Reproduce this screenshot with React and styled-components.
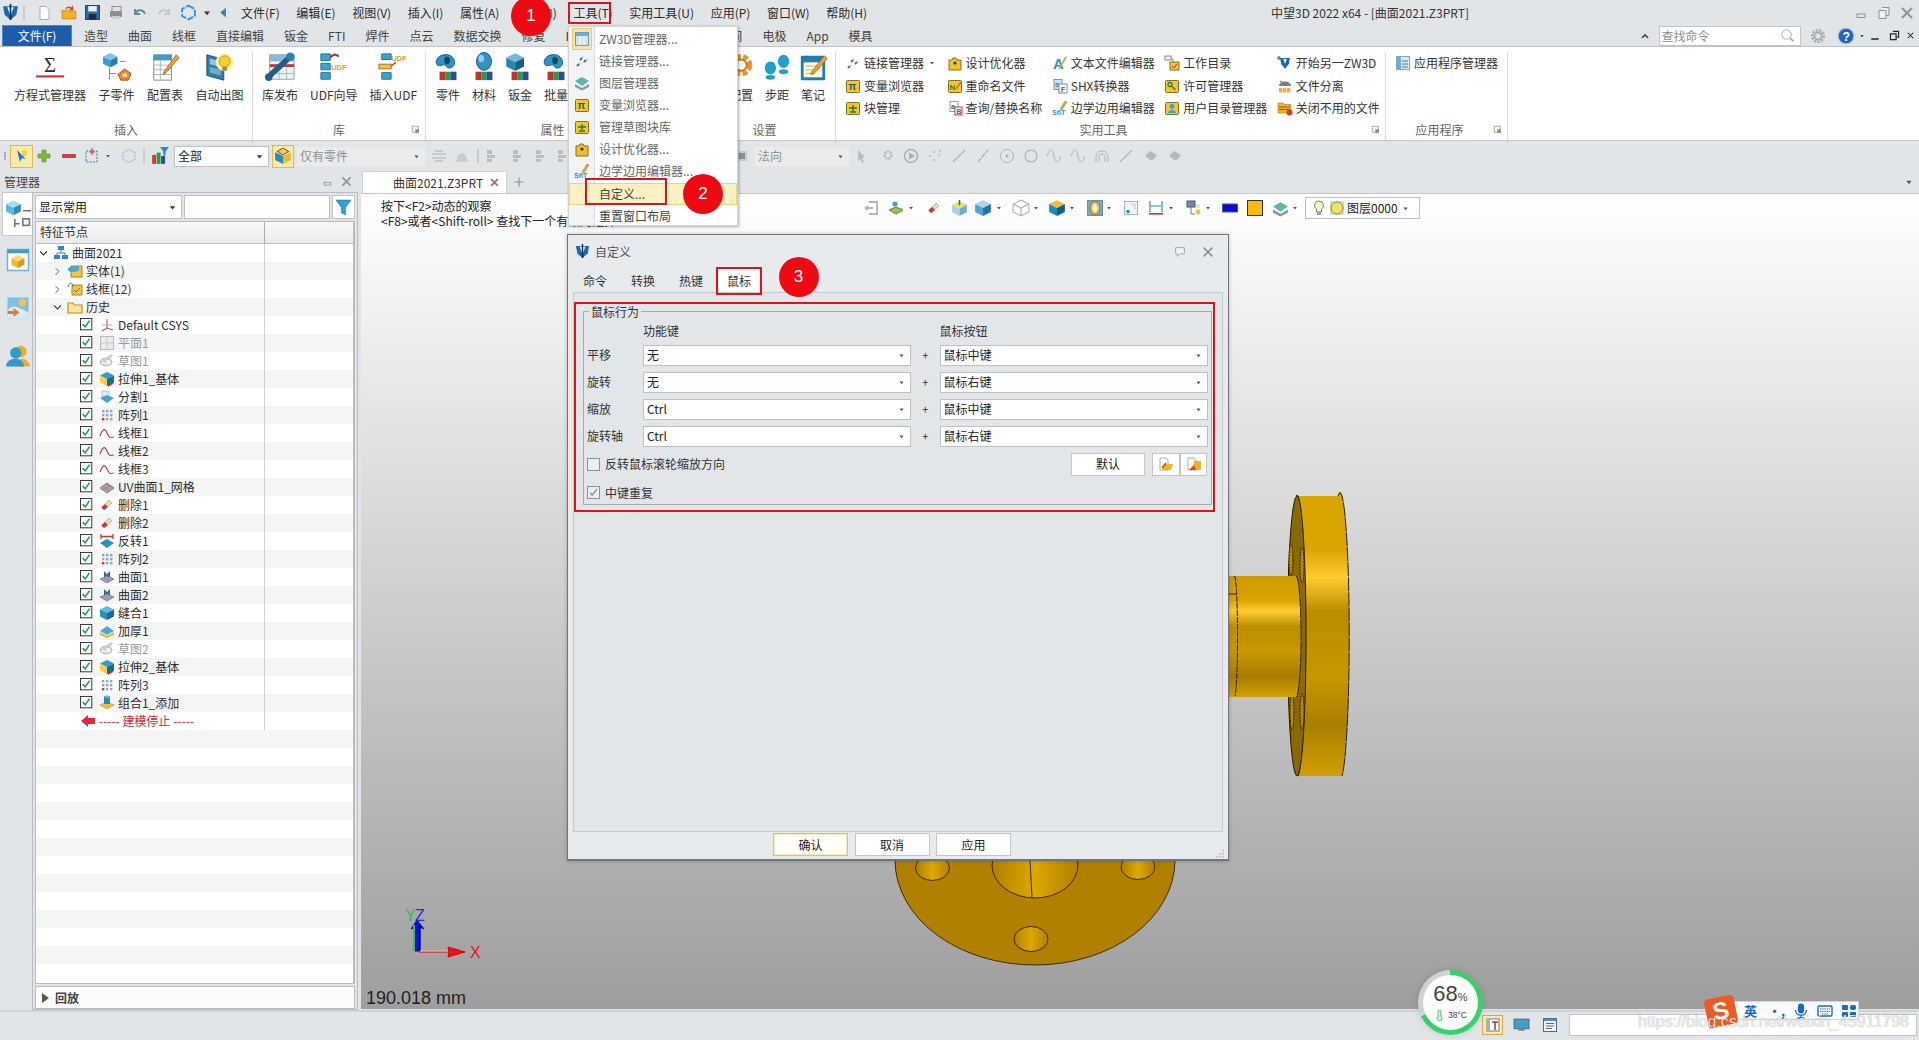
import React from "react"
import styled, { createGlobalStyle } from "styled-components"

const GlobalStyle = createGlobalStyle`
  html, body {
    margin: 0;
    padding: 0;
    background: #e1e5e8;
    overflow: hidden;
  }
  body {
    font-family: "Noto Sans CJK SC", "Liberation Sans", sans-serif;
    font-size: 12px;
    line-height: 18px;
    color: #333;
  }
  * {
    box-sizing: border-box;
  }
`

// 작은 아이콘 도우미
const Cube = ({ t, l, r }) => (
  <>
    <polygon points="8,1 15,4.5 8,8 1,4.5" fill={t} />
    <polygon points="1,4.5 8,8 8,15 1,11.5" fill={l} />
    <polygon points="15,4.5 8,8 8,15 15,11.5" fill={r} />
  </>
)

const YellowBox = ({ children }) => (
  <>
    <rect x="1.5" y="2.5" width="13" height="12" rx="1" fill="#f5c530" stroke="#8a6d1e" />
    {children}
  </>
)

const Tiny = ({ x, y, c = "#333", s = 7, children }) => (
  <text x={x} y={y} fontSize={s} fill={c} fontFamily="Liberation Sans" fontWeight="700">
    {children}
  </text>
)

const Grid3 = (
  <>
    {[3, 7, 11].map((x) =>
      [3, 7, 11].map((y) => (
        <rect key={x + "-" + y} x={x} y={y} width="2.4" height="2.4" fill={y === 11 && x < 7 ? "#c0392b" : "#8fa3bb"} />
      ))
    )}
  </>
)

const SketchMark = (
  <>
    <ellipse cx="7" cy="9" rx="5.5" ry="3.5" fill="none" stroke="#c4c6c8" strokeWidth="2" />
    <path d="M4 9l9-7" stroke="#c9cbcd" strokeWidth="2.4" />
    <circle cx="7" cy="9" r="1.6" fill="#d8dadc" />
  </>
)

const Wave = <path d="M1 11c3-8 5-8 7-3s3 5 7 4" fill="none" stroke="#b5433c" strokeWidth="1.2" />

const Eraser = (
  <>
    <path d="M5 13L2.5 10.5 10 3l3 3z" fill="#efd9b6" stroke="#a89a8a" strokeWidth=".6" />
    <path d="M5 13L2.5 10.5 6 7l3 3z" fill="#c43b3b" />
  </>
)

const Surf = (
  <>
    <path d="M5 2l3 3 3-3v7H5z" fill="#2f6f9f" />
    <path d="M1 10l7-3 7 3-7 4z" fill="#7fa9c9" stroke="#c0524f" strokeWidth=".7" />
  </>
)

const I = {
  logo: (
    <>
      <path d="M1 2h14l-1.5 8L8 15l-5.5-5z" fill="#1b6aa8" />
      <path d="M5 3h6L8 11z" fill="#fff" />
      <path d="M8 0v15" stroke="#10324f" strokeWidth="1.6" />
    </>
  ),
  doc: <path d="M4 1.5h6l3 3v10H4z" fill="#fff" stroke="#a8adb2" />,
  open: (
    <>
      <path d="M1 6h5l1 1h7v7H1z" fill="#f4b41f" stroke="#b27b10" strokeWidth=".6" />
      <path d="M4 5c1-3 4-3 6-2l1-2 1 5-5 0 2-1.5c-1-.6-3-.6-5 .5z" fill="#d9491e" />
    </>
  ),
  save: (
    <>
      <rect x="1.5" y="1.5" width="13" height="13" fill="#2d6ea6" stroke="#1c4468" />
      <rect x="4" y="2" width="8" height="5" fill="#eef3f6" />
      <rect x="4.5" y="9.5" width="7" height="5" fill="#1c2c3a" />
    </>
  ),
  print: (
    <>
      <rect x="4" y="1.5" width="9" height="5" fill="#e2e2e2" stroke="#8d8d8d" />
      <rect x="2" y="6" width="12" height="6" rx="1" fill="#8d8f91" />
      <rect x="4" y="11" width="8" height="3" fill="#cfcfcf" />
    </>
  ),
  undo: <path d="M3 9c2-5 8-5 10 0M3 4v5h5" fill="none" stroke="#5f8aa6" strokeWidth="2" />,
  redo: <path d="M13 9c-2-5-8-5-10 0M13 4v5H8" fill="none" stroke="#c4c8cb" strokeWidth="2" />,
  sync: <path d="M8 1.5l6 3.2v6.6l-6 3.2-6-3.2V4.7z" fill="none" stroke="#3a93cf" strokeWidth="1.8" strokeDasharray="6 1.6" />,
  caret: <path d="M4 6h8l-4 5z" fill="#333" />,
  dcaret: <path d="M5 6.5h6l-3 4z" fill="#555" />,
  back: <path d="M11 2v12L4 8z" fill="#2f86c9" />,
  sigma: (
    <>
      <text x="16" y="21" fontSize="22" textAnchor="middle" fill="#2a2a2a" fontFamily="Liberation Serif">
        Σ
      </text>
      <rect x="1" y="25" width="30" height="2" fill="#e01b24" />
    </>
  ),
  subpart: (
    <>
      <g transform="scale(1.1)">
        <Cube t="#7fc4e4" l="#3a9ccc" r="#1e7fb2" />
      </g>
      <path d="M19 10h6M8 17v12M8 23h7" stroke="#7a8288" fill="none" />
      <path d="M17 24l7-6 7 5-3 7h-8z" fill="#e8892b" stroke="#a34e10" />
      <path d="M21 24l5-2 1 4-4 1z" fill="#fbe7b2" />
    </>
  ),
  config: (
    <>
      <rect x="4" y="3" width="19" height="27" fill="#fff" stroke="#7d8c96" />
      <rect x="4" y="3" width="19" height="6" fill="#3d9cc3" />
      <path d="M4 14h19M4 19h19M4 24h19M11 9v21" stroke="#a8b4ba" />
      <path d="M15 21L28 3l3 3-14 16-3 2z" fill="#f2a52c" stroke="#a6661a" />
    </>
  ),
  autodraw: (
    <>
      <path d="M2 3l18 5v22L2 25z" fill="#2f7fa6" stroke="#1c5270" />
      <path d="M5 7l12 3v6L5 13z" fill="#8fc7dd" />
      <path d="M5 16l12 3v6L5 22z" fill="#6aaecb" />
      <circle cx="21" cy="11" r="9.5" fill="#fbf0a2" />
      <circle cx="21" cy="10" r="6" fill="#f6cf2e" stroke="#c8921a" />
      <rect x="18.5" y="16" width="5" height="4" fill="#9a8a5a" />
    </>
  ),
  libpub: (
    <>
      <rect x="5" y="3" width="26" height="26" fill="#eef3f6" stroke="#8aa0ae" />
      <rect x="5" y="3" width="26" height="7" fill="#86bcd8" />
      <rect x="5" y="13" width="26" height="3" fill="#b73c3c" />
      <path d="M15 17v12M23 17v12M5 23h26" stroke="#a6b4bc" />
      <path d="M3 27L26 6" stroke="#1e5f88" strokeWidth="6" />
      <circle cx="27" cy="5" r="4.5" fill="#2f80b2" />
      <circle cx="4" cy="27" r="4" fill="#1e5f88" />
    </>
  ),
  udfwiz: (
    <>
      <path d="M2 2h10v7H2zM2 12h10v7H2zM2 22h10v7H2z" fill="#3aa5cf" stroke="#1c6f90" />
      <path d="M12 6c3-4 7-4 9-1" fill="none" stroke="#b53a2a" strokeWidth="2.4" />
      <Tiny x="13" y="19" c="#d9a032" s="8">UDF</Tiny>
    </>
  ),
  udfins: (
    <>
      <path d="M4 2h10v6H4zM4 22h10v7H4z" fill="#3aa5cf" stroke="#1c6f90" />
      <rect x="1" y="13" width="13" height="5" fill="#f3c243" stroke="#9a7520" />
      <path d="M14 15l5-4" stroke="#c24a2a" strokeWidth="1.6" />
      <Tiny x="14" y="10" c="#d9a032" s="8">UDF</Tiny>
    </>
  ),
  part: (
    <>
      <path d="M4 8c3-6 13-7 17-2s2 10-3 11-3-5-8-3-8-1-6-6z" fill="#2f93c4" stroke="#14597e" />
      <ellipse cx="15" cy="9" rx="3" ry="4" fill="#0e4866" />
      <rect x="7" y="21" width="6" height="9" fill="#c0342b" />
      <rect x="13" y="21" width="6" height="9" fill="#2d9a45" />
      <rect x="19" y="21" width="6" height="9" fill="#2b4aa8" />
    </>
  ),
  material: (
    <>
      <ellipse cx="16" cy="10" rx="8" ry="9.5" fill="#2f93c4" stroke="#14597e" />
      <ellipse cx="13" cy="7" rx="3" ry="4" fill="#8fd0ea" />
      <rect x="7" y="21" width="6" height="9" fill="#c0342b" />
      <rect x="13" y="21" width="6" height="9" fill="#2d9a45" />
      <rect x="19" y="21" width="6" height="9" fill="#2b4aa8" />
    </>
  ),
  sheet: (
    <>
      <g transform="scale(1.35)">
        <Cube t="#75bbd8" l="#2a86b0" r="#175f84" />
      </g>
      <rect x="7" y="21" width="6" height="9" fill="#c0342b" />
      <rect x="13" y="21" width="6" height="9" fill="#2d9a45" />
      <rect x="19" y="21" width="6" height="9" fill="#2b4aa8" />
    </>
  ),
  cog: (
    <>
      <circle cx="16" cy="14" r="9" fill="none" stroke="#e8952c" strokeWidth="6" strokeDasharray="5 2.4" />
      <circle cx="16" cy="14" r="6" fill="none" stroke="#c97a1c" strokeWidth="2" />
    </>
  ),
  steps: (
    <>
      <ellipse cx="9" cy="17" rx="6" ry="7" fill="#1da1c9" />
      <ellipse cx="9" cy="27" rx="5" ry="2.6" fill="#1da1c9" />
      <ellipse cx="23" cy="10" rx="6" ry="7" fill="#1da1c9" />
      <ellipse cx="23" cy="21" rx="5" ry="2.6" fill="#1da1c9" />
    </>
  ),
  note: (
    <>
      <rect x="3" y="4" width="26" height="26" rx="1" fill="#1b7fb0" />
      <rect x="6" y="11" width="20" height="16" fill="#fff7d8" />
      <path d="M8 15h14M8 19h14M8 23h10" stroke="#a8b5a0" />
      <path d="M14 22L28 4l3 3-14 16-3 1z" fill="#f2a52c" stroke="#a6661a" />
    </>
  ),
  link: <path d="M3 13l3-3M6 7l3-3M10 9l3-3" fill="none" stroke="#2f74b5" strokeWidth="2" strokeDasharray="3 1" />,
  grid: (
    <>
      <rect x="1.5" y="1.5" width="13" height="13" fill="#cfe2ee" stroke="#5d9ec2" />
      <rect x="2" y="2" width="12" height="3" fill="#6db0d2" />
      <path d="M6 5v9M10 5v9" stroke="#fff" />
    </>
  ),
  layers: (
    <>
      <path d="M1 9l7 4 7-4v3l-7 3.5L1 12z" fill="#8a9aa4" />
      <path d="M1 6l7-4 7 4-7 5z" fill="#5bb8aa" />
    </>
  ),
  pi: <YellowBox><Tiny x="3.5" y="12" c="#1d5f6a" s="10">π</Tiny></YellowBox>,
  block: <YellowBox><path d="M4 8h8M8 5v6M5 12h6" stroke="#1f7a3a" strokeWidth="1.4" /></YellowBox>,
  optim: (
    <>
      <path d="M2 5h3l1-2h3l1 2h4v10H2z" fill="#f1c22c" stroke="#8a6d1e" />
      <circle cx="8" cy="8" r="1.6" fill="#333" />
    </>
  ),
  sht: (
    <>
      <Tiny x="0" y="15" c="#2794c4" s="7">SñT</Tiny>
      <path d="M8 9l5-8 2 1-5 8z" fill="#e6a53a" stroke="#8a6d1e" strokeWidth=".4" />
    </>
  ),
  rename: <YellowBox><Tiny x="2.5" y="12" c="#2e7d4f" s="8">N</Tiny><path d="M9 11l5-7" stroke="#c9772a" strokeWidth="1.5" /></YellowBox>,
  query: (
    <>
      <rect x="3" y="1.5" width="8" height="10" fill="#fff" stroke="#8aa0ae" />
      <Tiny x="4" y="9" c="#2b5da8" s="7">a</Tiny>
      <rect x="8" y="7" width="7" height="8" fill="#fff" stroke="#b53a2a" />
      <Tiny x="9.5" y="14" c="#b53a2a" s="7">B</Tiny>
    </>
  ),
  textedit: (
    <>
      <Tiny x="1" y="14" c="#2794c4" s="15">A</Tiny>
      <path d="M7 14L14 2" stroke="#e0a030" strokeWidth="1.6" />
    </>
  ),
  shx: (
    <>
      <rect x="2" y="1.5" width="8" height="10" fill="#cfe2ee" stroke="#6a9ec0" />
      <Tiny x="3" y="9" c="#2b5da8" s="6">S</Tiny>
      <rect x="7" y="6" width="8" height="9" fill="#fff" stroke="#7a8a94" />
      <Tiny x="9" y="13.5" c="#c0392b" s="7">F</Tiny>
    </>
  ),
  workdir: (
    <>
      <rect x="1" y="1" width="6" height="4" fill="#eee" stroke="#888" />
      <path d="M7 4h2v4" fill="none" stroke="#888" />
      <rect x="6" y="7" width="9" height="8" fill="#f5c530" stroke="#8a6d1e" />
      <path d="M8 11l2 2 3-4" fill="none" stroke="#a33" />
    </>
  ),
  license: <YellowBox><circle cx="6" cy="6.5" r="2" fill="none" stroke="#2e7d4f" strokeWidth="1.3" /><path d="M7.5 8l4 4" stroke="#2e7d4f" strokeWidth="1.4" /></YellowBox>,
  userdir: <YellowBox><circle cx="8" cy="6.5" r="2.4" fill="#3f9fd0" /><path d="M4 13c0-4 8-4 8 0z" fill="#3f9fd0" /></YellowBox>,
  start: (
    <>
      <path d="M3 3h10l-1.2 6L8 14 4.2 9z" fill="#1b6aa8" />
      <path d="M6 4h4L8 9z" fill="#dbe9f2" />
      <path d="M2 1v4M0 3h4" stroke="#48a54d" strokeWidth="1.6" />
    </>
  ),
  splitfile: (
    <>
      <path d="M2 8c0-6 12-6 12 0H8z" fill="#5f8aa6" />
      <path d="M3 3l6 4" stroke="#d84a3a" strokeWidth="1.2" />
      {[2, 6, 10].map((x) => (
        <rect key={x} x={x} y="10" width="3.4" height="4.5" fill="#f0b040" />
      ))}
    </>
  ),
  closefile: (
    <>
      <path d="M1 3h5l1 1.5h7V13H1z" fill="#f4b41f" stroke="#a97b12" strokeWidth=".6" />
      <path d="M2 7h11M2 9.5h11" stroke="#8a5d10" />
      <circle cx="12.5" cy="12.5" r="3" fill="#d63a2f" />
    </>
  ),
  appmgr: (
    <>
      <rect x="1.5" y="1.5" width="13" height="13" fill="#d8e8f1" stroke="#7fa7be" />
      <rect x="1.5" y="1.5" width="4.5" height="13" fill="#6fb0d1" />
      <path d="M7 6h6M7 9h6M7 12h6" stroke="#4b7d99" />
    </>
  ),
  launcher: (
    <>
      <path d="M3 3h8v8H3z" fill="#fff" stroke="#8b8f93" />
      <path d="M7 7h5v5H7z" fill="#8b8f93" />
    </>
  ),
  chevUp: <path d="M3 10l5-5 5 5-2 1-3-3-3 3z" fill="#444" />,
  search: (
    <>
      <circle cx="7" cy="7" r="5" fill="none" stroke="#b9c0c5" strokeWidth="1.2" />
      <path d="M11 11l3 3" stroke="#7aa0b4" strokeWidth="1.6" />
    </>
  ),
  gear: (
    <>
      <circle cx="8" cy="8" r="5" fill="none" stroke="#a9afb3" strokeWidth="2.6" strokeDasharray="2 1" />
      <circle cx="8" cy="8" r="3" fill="none" stroke="#9aa1a6" />
    </>
  ),
  help: (
    <>
      <circle cx="8" cy="8" r="7" fill="#2363b8" stroke="#a9c6e6" />
      <Tiny x="4.8" y="12" c="#fff" s="11">?</Tiny>
    </>
  ),
  winMin: <rect x="3" y="11" width="10" height="2" fill="#1e2428" />,
  winRestore: <path d="M6 3h7v7h-2M3 6h7v7H3z" fill="none" stroke="#1e2428" strokeWidth="1.4" />,
  winClose: <path d="M4 4l8 8M12 4l-8 8" stroke="#1e2428" strokeWidth="1.5" />,
  capMin: <rect x="4" y="9" width="8" height="3.5" fill="none" stroke="#8d9398" />,
  capRestore: <path d="M6 2.5h7v8h-3M3 5.5h7v8H3z" fill="#eef0f1" stroke="#8d9398" />,
  capClose: <path d="M3 3l10 10M13 3L3 13" stroke="#8d9398" strokeWidth="2" />,
  docClose: <path d="M3 3l10 10M13 3L3 13" stroke="#8a7a5c" strokeWidth="2.4" />,
  plus2: <path d="M8 2v12M2 8h12" stroke="#8d9398" strokeWidth="1.6" />,
  tip: <path d="M3 3h10v7H8l-3 3v-3H3z" fill="#f2f4f5" stroke="#9aa0a4" />,
  gCheck: <path d="M3 8l3 4 7-9" fill="none" stroke="#7d8488" strokeWidth="1.8" />,
  handle: <path d="M8 2v12" stroke="#555" strokeWidth="2" strokeDasharray="2 1.6" />,
  pick: (
    <>
      <path d="M3 2l3 12 2-4 4 1z" fill="#1c7ec0" />
      <path d="M8 3c3-2 6 0 5 3l-2 2H9z" fill="#f7d21e" />
    </>
  ),
  plus: <path d="M6 2h4v4h4v4h-4v4H6v-4H2V6h4z" fill="#7fb73b" stroke="#5c8c22" strokeWidth=".6" />,
  minus: <rect x="1" y="6" width="14" height="4" rx="1" fill="#cc4040" />,
  dashBox: (
    <>
      <rect x="2" y="3" width="11" height="11" fill="none" stroke="#2d7aa8" strokeDasharray="2 1.4" />
      <path d="M8 0v7M5 4h6" stroke="#d83b30" strokeWidth="1.2" />
    </>
  ),
  hex: <path d="M8 1.5l6 3.2v6.6l-6 3.2-6-3.2V4.7z" fill="none" stroke="#9cc4da" strokeWidth="1.2" strokeDasharray="3 1" />,
  vsep: <rect x="7.5" y="1" width="1" height="14" fill="#aeb3b7" />,
  chartFilter: (
    <>
      <rect x="1" y="7" width="3.5" height="8" fill="#d23c2e" />
      <rect x="5" y="5" width="3.5" height="10" fill="#2d9a45" />
      <rect x="9" y="8" width="3.5" height="7" fill="#2b4aa8" />
      <path d="M8 0h8l-3 4v3l-2 1V4z" fill="#1f93c4" />
    </>
  ),
  goldCube: (
    <>
      <Cube t="#ffffff" l="#2f8ab8" r="#e8b93a" />
      <path d="M3 4l5-3 5 3-5 3z" fill="#f5d060" stroke="#7a6a22" />
    </>
  ),
  gLines: (
    <>
      <path d="M1 6h14M1 10h14" stroke="#aab0b4" />
      <rect x="4" y="2" width="8" height="2" fill="#c4c8cb" />
      <rect x="4" y="12" width="8" height="2" fill="#c4c8cb" />
    </>
  ),
  gBell: <path d="M3 12c0-9 10-9 10 0zM2 12h12v2H2z" fill="#c9cdd0" />,
  gAlign: <path d="M3 2h5v4H3zM3 7h8v3H3zM3 11h5v3H3z" fill="#b9bdc0" />,
  gSquare: <rect x="4" y="4" width="8" height="8" fill="#8d9194" stroke="#c8cbcd" strokeWidth="2" />,
  gPick: <path d="M4 2l7 7-3 1 2 4-2 1-2-4-2 2z" fill="#b8bcbf" />,
  gGear: <circle cx="9" cy="7" r="3.5" fill="none" stroke="#b3b7ba" strokeWidth="2.4" strokeDasharray="2 1" />,
  gPlay: (
    <>
      <circle cx="8" cy="8" r="6.5" fill="none" stroke="#a9adb0" strokeWidth="1.4" />
      <path d="M6 4.5l6 3.5-6 3.5z" fill="#a9adb0" />
    </>
  ),
  gDots: <path d="M2 8h2M6 4h2M6 12h2M11 7h2M12 3h2" stroke="#b5b9bc" strokeWidth="1.6" />,
  gLine: <path d="M2 14L14 2" stroke="#b0b4b7" strokeWidth="1.2" />,
  gLine2: <path d="M3 14L13 2" stroke="#b0b4b7" strokeWidth="1.4" strokeDasharray="5 1" />,
  gCircleDot: (
    <>
      <circle cx="8" cy="8" r="6.5" fill="none" stroke="#aeb2b5" />
      <circle cx="8" cy="8" r="1.5" fill="#aeb2b5" />
    </>
  ),
  gCircle: <circle cx="8" cy="8" r="6" fill="none" stroke="#aeb2b5" strokeWidth="1.2" />,
  gWave: <path d="M1 8c3-8 5-8 7 0s4 8 7 0" fill="none" stroke="#aeb2b5" />,
  gArc: <path d="M2 14V9c0-8 12-8 12 0v5M5 14V9c0-4 6-4 6 0v5" fill="none" stroke="#aeb2b5" />,
  gBlob: <path d="M2 8l5-5 7 4-5 6z" fill="#b5b9bc" />,
  exit: (
    <>
      <path d="M6 2h8v12H6" fill="#fff" stroke="#9aa0a4" strokeWidth="1.4" />
      <path d="M1 8l4-3v2h5v2H5v2z" fill="#b2b7bb" />
    </>
  ),
  mesh: (
    <>
      <path d="M1 10l7-3 7 3-7 4z" fill="#97c25d" stroke="#5a8a2a" />
      <circle cx="7" cy="4" r="2.6" fill="#4c9cc7" />
      <path d="M14 8v5" stroke="#d7a336" />
    </>
  ),
  eraser: Eraser,
  cubeUp: (
    <>
      <Cube t="#f8d879" l="#a8d3e6" r="#6fb0d1" />
      <path d="M8 0v5" stroke="#2c7a44" strokeWidth="1.4" />
    </>
  ),
  blueCube: <Cube t="#a9d4ea" l="#4da2cf" r="#1c76a8" />,
  wireCube: (
    <>
      <path d="M8 1l7 3.5v7L8 15l-7-3.5v-7z" fill="#fff" stroke="#a9b4bb" />
      <path d="M1 4.5L8 8l7-3.5M8 8v7" fill="none" stroke="#a9b4bb" />
    </>
  ),
  halfCube: <Cube t="#f6bb32" l="#1d8cbf" r="#0e5f8c" />,
  coin: (
    <>
      <rect x="1.5" y="1.5" width="13" height="13" fill="#7fb5cc" stroke="#4e8aa6" />
      <ellipse cx="8" cy="8" rx="4.5" ry="6" fill="#e4c268" stroke="#8e7630" />
      <ellipse cx="8" cy="8" rx="2" ry="3.6" fill="#f5eed6" />
    </>
  ),
  frame: (
    <>
      <rect x="1.5" y="1.5" width="13" height="13" fill="#f2f5f7" stroke="#9fb5c3" />
      <rect x="3.5" y="10" width="3" height="3" fill="#2b7fb0" />
      <path d="M8 4h4v6" fill="none" stroke="#8fb0c3" strokeDasharray="1.5 1" />
    </>
  ),
  dim: (
    <>
      <path d="M2 1v11M14 1v11" stroke="#3a8ab5" strokeWidth="1.2" />
      <path d="M3 6h10" stroke="#3a8ab5" />
      <rect x="1" y="13" width="14" height="1.6" fill="#c53a30" />
    </>
  ),
  net: (
    <>
      <rect x="1" y="1" width="8" height="6" fill="#6b8fa8" stroke="#556" />
      <path d="M5 7v7h4" fill="none" stroke="#778" />
      <circle cx="12" cy="6" r="2.2" fill="#dfe3e6" />
      <circle cx="12" cy="12" r="2.4" fill="#efc323" />
    </>
  ),
  blueRect: <rect x="0.5" y="4" width="15" height="8" fill="#0a0adf" stroke="#55585c" />,
  orange: <rect x="0.5" y="0.5" width="15" height="15" fill="#fdb900" stroke="#333" />,
  bulb: (
    <>
      <path d="M8 1a4.5 4.5 0 0 1 2.5 8.2V12h-5V9.2A4.5 4.5 0 0 1 8 1z" fill="#fff9c9" stroke="#7a7a5a" />
      <rect x="6" y="12.5" width="4" height="2.5" fill="#9a9a9a" />
    </>
  ),
  sun: (
    <>
      <rect x="1" y="1" width="14" height="14" fill="#cfe0c0" />
      <circle cx="8" cy="8" r="6" fill="#f0e466" stroke="#8a8a40" />
    </>
  ),
  open2: (
    <>
      <path d="M2 2h6l2 2v10H2z" fill="#fff" stroke="#a8adb2" />
      <path d="M6 8h9l-2 6H4z" fill="#f4b41f" />
      <path d="M4 12l4-5" stroke="#d9491e" strokeWidth="1.6" />
    </>
  ),
  save2: (
    <>
      <path d="M2 2h6l2 2v10H2z" fill="#fff" stroke="#a8adb2" />
      <path d="M8 5h7v9H7z" fill="#f4b41f" />
      <path d="M3 14l5-5 2 5z" fill="#d9491e" />
    </>
  ),
  tabPart: (
    <>
      <g transform="translate(0 -1) scale(.65)">
        <Cube t="#a8dbf1" l="#5bb5dc" r="#2f8cb9" />
      </g>
      <path d="M11 6h5M6 11v5M6 14h3" stroke="#6f777c" fill="none" />
      <rect x="11" y="11" width="4" height="4" fill="none" stroke="#6f777c" />
    </>
  ),
  tabSolid: (
    <>
      <rect x="1" y="1" width="14" height="14" fill="#fff" stroke="#6fb3d5" />
      <rect x="1" y="1" width="14" height="2.5" fill="#3d9cc3" />
      <g transform="translate(3 4) scale(.62)">
        <Cube t="#fbd977" l="#f0b92c" r="#d59a1a" />
      </g>
    </>
  ),
  tabImage: (
    <>
      <rect x="1" y="1" width="14" height="14" fill="#7ec1e0" />
      <circle cx="11" cy="4.5" r="2.5" fill="#f6c445" />
      <path d="M1 10c3-5 6-3 14 1v4H1z" fill="#d9ecf6" />
      <path d="M1 10h4V8l4 3-4 3v-2H1z" fill="#e8782e" />
    </>
  ),
  tabUser: (
    <>
      <circle cx="10" cy="5" r="3.8" fill="#f0ad27" />
      <path d="M6 15c0-7 9-7 10 0z" fill="#f0ad27" />
      <circle cx="6.5" cy="6" r="3.8" fill="#2f9ad0" />
      <path d="M0 15c0-7 12-7 12 0z" fill="#2f9ad0" />
    </>
  ),
  funnel: <path d="M1 1h14L10 8v7l-4-2V8z" fill="#27a7d2" stroke="#1a7ea3" strokeWidth=".6" />,
  chevD: <path d="M3 5l5 5 5-5" fill="none" stroke="#333" strokeWidth="1.6" />,
  chevR: <path d="M5 3l5 5-5 5" fill="none" stroke="#999" strokeWidth="1.6" />,
  hier: (
    <>
      <rect x="5" y="1" width="6" height="4" fill="#2f86c9" />
      <rect x="1" y="10" width="6" height="4" fill="#2f86c9" />
      <rect x="9" y="10" width="6" height="4" fill="#2f86c9" />
      <path d="M8 5v3M4 10V8h8v2" fill="none" stroke="#2f86c9" />
    </>
  ),
  solid: (
    <>
      <path d="M4 3h11v11H4z" fill="#f6c445" stroke="#a8842a" />
      <path d="M1 6c0-3 10-4 11-2v3c0 2-11 3-11 0z" fill="#4aa6d3" />
    </>
  ),
  wire: (
    <>
      <path d="M5 4h10v10H5z" fill="#f6c445" stroke="#a8842a" />
      <path d="M1 6c1-5 5-5 5 0M7 9l2 2 4-4" fill="none" stroke="#3e8d5a" />
    </>
  ),
  folder: <path d="M1 4h5l1.5 2H15v8H1z" fill="#fbe3a0" stroke="#c98f14" strokeWidth="1.2" />,
  csys: (
    <>
      <path d="M8 2v9M8 11l6 2M8 11l-5 3" stroke="#c65550" strokeWidth="1.1" />
      <path d="M3 8h10" stroke="#9ab6c6" />
    </>
  ),
  plane: (
    <>
      <rect x="1.5" y="1.5" width="13" height="13" fill="#e9ebec" stroke="#b9bdc0" />
      <path d="M8 2v12M2 8h12" stroke="#c8cbcd" />
    </>
  ),
  sketch: SketchMark,
  extrude: (
    <>
      <Cube t="#2f9ad0" l="#f6cf50" r="#1a6a98" />
      <path d="M9 15l5-3" stroke="#d02a2a" strokeWidth="1.6" />
    </>
  ),
  split: (
    <>
      <path d="M3 2h7v6H3z" fill="#dbeaf3" stroke="#a9c6d8" />
      <path d="M1 9l7-3 7 3-7 5z" fill="#45a5d1" />
    </>
  ),
  pattern: Grid3,
  wave: Wave,
  uv: (
    <>
      <path d="M1 9l7-5 7 5-7 5z" fill="#a5a2b5" stroke="#b5433c" strokeWidth=".7" />
      <path d="M4 7l7 5M7 5l7 5M11 6L4 11" stroke="#7d7a92" strokeWidth=".6" />
    </>
  ),
  flip: (
    <>
      <path d="M2 1v5M14 1v5M2 3.5h12" stroke="#c53a30" strokeWidth="1.3" />
      <path d="M1 10l7-4 7 4-7 5z" fill="#2c8fc4" />
    </>
  ),
  surf: Surf,
  sew: <Cube t="#67b8de" l="#2b8dbd" r="#156c9c" />,
  thick: (
    <>
      <path d="M1 8l7-5 7 5-7 4z" fill="#4aaad6" />
      <path d="M1 9l7 4 7-4v3l-7 3-7-3z" fill="#ecb737" />
    </>
  ),
  combine: (
    <>
      <path d="M1 10l7-3 7 3-7 4z" fill="#f0be42" stroke="#a8842a" strokeWidth=".5" />
      <rect x="5" y="1" width="6" height="8" fill="#2587bb" />
      <ellipse cx="8" cy="1.8" rx="3" ry="1.4" fill="#61b7dd" />
    </>
  ),
  stop: <path d="M15 5v6H8v3L1 8l7-6v3z" fill="#e7283e" />,
  status1: (
    <>
      <rect x="2" y="2" width="12" height="12" fill="#fff" stroke="#6b7a86" />
      <rect x="2" y="2" width="3" height="12" fill="#8db6d0" />
      <path d="M7 5h6M10 5v8" stroke="#c0392b" strokeWidth="1.6" />
    </>
  ),
  monitor: (
    <>
      <rect x="1" y="2" width="14" height="9" fill="#3aa3c7" stroke="#5d6a72" />
      <rect x="5" y="11" width="6" height="2" fill="#7a8a94" />
    </>
  ),
  lines: (
    <>
      <rect x="1.5" y="1.5" width="13" height="13" fill="#eef3f7" stroke="#3f6ea0" />
      <rect x="2" y="2" width="12" height="2" fill="#5d8ab6" />
      <path d="M4 6.5h8M4 9h8M4 11.5h6" stroke="#667" />
    </>
  ),
  mic: (
    <>
      <rect x="5" y="0.5" width="6" height="10" rx="3" fill="#1769c2" />
      <path d="M2.5 7c0 7 11 7 11 0M8 12v3M4.5 15h7" fill="none" stroke="#1769c2" strokeWidth="1.3" />
    </>
  ),
  keys: (
    <>
      <rect x="1" y="3" width="14" height="10" rx="1.5" fill="none" stroke="#1769c2" strokeWidth="1.4" />
      <path d="M3 6h10M3 8.5h10M5 11h6" stroke="#1769c2" strokeWidth="1.2" strokeDasharray="1.4 .8" />
    </>
  ),
  tiles: (
    <>
      <rect x="1" y="2" width="6" height="5" rx="1" fill="#1769c2" />
      <rect x="9" y="2" width="6" height="5" rx="2" fill="#1769c2" />
      <rect x="1" y="9" width="6" height="5" rx="1" fill="#1769c2" />
      <rect x="9" y="9" width="6" height="5" rx="1" fill="#1769c2" />
    </>
  ),
  thermo: <path d="M6 2a2 2 0 0 1 4 0v7a3.6 3.6 0 1 1-4 0z" fill="#d6f5df" stroke="#2fb35b" strokeWidth="1.2" />,
  check: (
    <>
      <rect x="0.5" y="0.5" width="13" height="13" fill="#fff" stroke="#222" />
      <path d="M3 7l3 3 5-7" fill="none" stroke="#22a33a" strokeWidth="1.8" />
    </>
  ),
  grip: <path d="M10 4h2v2h-2zM6 8h2v2H6zM10 8h2v2h-2zM2 12h2v2H2zM6 12h2v2H6zM10 12h2v2h-2z" fill="#b3b7ba" />,
}

const big = new Set(["sigma", "subpart", "config", "autodraw", "libpub", "udfwiz", "udfins", "part", "material", "sheet", "cog", "steps", "note"])

const Ico = ({ n, s = 16 }) => (
  <svg width={s} height={s} viewBox={big.has(n) ? "0 0 32 32" : "0 0 16 16"} style={{ display: "block", flex: "none" }}>
    {I[n]}
  </svg>
)

const Slot = styled.span`
  display: block;
  flex: none;
  width: ${(p) => p.$s}px;
  height: ${(p) => p.$s}px;
  margin-left: ${(p) => p.$ml}px;
`

// 가로 좌표(중심값) 목록을 margin 으로 바꿔서 흐름대로 배치
const Strip = ({ from, items }) => {
  let end = from
  return items.map(([n, c, s = 16], i) => {
    const ml = c - s / 2 - end
    end = c + s / 2
    return (
      <Slot key={i} $ml={ml} $s={s}>
        <Ico n={n} s={s} />
      </Slot>
    )
  })
}

const Page = styled.div`
  position: relative;
  width: 1919px;
  height: 1040px;
  overflow: hidden;
  display: flex;
  flex-direction: column;
  background: #e1e5e8;
`

/* 타이틀바 */
const TitleBar = styled.div`
  height: 25px;
  flex: none;
  display: flex;
  align-items: center;
`
const MenuBar = styled.div`
  display: flex;
  flex: none;
  gap: 16.6px;
  margin-left: 11.5px;
  width: 636px;
  color: #2b2b2b;
  white-space: nowrap;
`
const DocTitle = styled.div`
  margin-left: 394px;
  width: 389px;
  flex: none;
  white-space: nowrap;
  color: #333;
`
const TabRow = styled.div`
  height: 22px;
  flex: none;
  display: flex;
  align-items: center;
  border-bottom: 1px solid #bfc3c6;
`
const FileTab = styled.div`
  width: 70px;
  height: 21px;
  flex: none;
  margin-left: 2px;
  background: #1c5eab;
  border: 1px solid #4d86c6;
  border-bottom: 0;
  color: #fff;
  text-align: center;
  line-height: 20px;
`
const RibbonTab = styled.div`
  padding: 0 10px;
  flex: none;
  color: #444;
  white-space: nowrap;
  margin-left: ${(p) => p.$ml || 0}px;
`
const SearchBox = styled.div`
  width: 142px;
  height: 20px;
  flex: none;
  margin-left: 8px;
  background: #fff;
  border: 1px solid #c0c5c9;
  display: flex;
  align-items: center;
  justify-content: space-between;
  padding: 0 5px 0 2px;
  color: #8a8f93;
`

/* 리본 */
const Ribbon = styled.div`
  height: 94px;
  flex: none;
  display: flex;
  background: #fff;
  border-bottom: 1px solid #c5c8cb;
`
const Group = styled.div`
  width: ${(p) => p.$w}px;
  flex: none;
  margin-top: 5px;
  position: relative;
  display: flex;
  flex-direction: column;
  border-right: 1px solid #d9dbdd;
`
const GroupBody = styled.div`
  flex: 1;
  display: flex;
  justify-content: ${(p) => p.$end ? "flex-end" : "flex-start"};
  gap: ${(p) => p.$gap ?? 12}px;
  padding-left: ${(p) => p.$pl || 0}px;
  padding-right: ${(p) => p.$pr || 0}px;
`
const GroupLabel = styled.div`
  height: 19px;
  line-height: 18px;
  text-align: center;
  color: #666;
  padding-right: ${(p) => p.$pr || 0}px;
`
const Launcher = styled.span`
  position: absolute;
  right: 3px;
  bottom: 4px;
`
const BigItem = styled.div`
  display: flex;
  flex-direction: column;
  align-items: center;
  white-space: nowrap;
  color: #333;
  gap: 4px;
`
const UtilCol = styled.div`
  display: flex;
  flex-direction: column;
`
const UtilRow = styled.div`
  height: 22.5px;
  display: flex;
  align-items: center;
  gap: 3px;
  white-space: nowrap;
  color: #333;
`

/* 빠른 도구줄 */
const QuickBar = styled.div`
  height: 30px;
  flex: none;
  display: flex;
  align-items: center;
  position: relative;
`
const Combo = styled.div`
  flex: none;
  width: ${(p) => p.$w}px;
  height: ${(p) => p.$h || 21}px;
  margin-left: ${(p) => p.$ml || 0}px;
  background: ${(p) => (p.$off ? "#e9ebed" : "#fff")};
  border: 1px solid ${(p) => (p.$off ? "#e4e6e8" : "#bcc1c5")};
  color: ${(p) => (p.$off ? "#8d9195" : "#222")};
  display: flex;
  align-items: center;
  justify-content: space-between;
  padding: 0 3px 0 3px;
  white-space: nowrap;
`
const ActiveTool = styled.div`
  flex: none;
  width: ${(p) => p.$w}px;
  height: 23px;
  margin-left: ${(p) => p.$ml}px;
  background: #fbe9a8;
  border: 1px solid #e0b75a;
  display: flex;
  align-items: center;
  justify-content: center;
`

/* 본문 */
const Main = styled.div`
  flex: 1;
  display: flex;
  min-height: 0;
`
const LeftPane = styled.div`
  width: 361px;
  flex: none;
  display: flex;
  flex-direction: column;
`
const PaneHead = styled.div`
  height: 21px;
  flex: none;
  display: flex;
  align-items: center;
  padding-left: 4px;
  color: #444;
`
const PaneBody = styled.div`
  flex: 1;
  display: flex;
  min-height: 0;
`
const SideTabs = styled.div`
  width: 32px;
  flex: none;
  padding-top: 0;
  display: flex;
  flex-direction: column;
  align-items: center;
`
const SideTab = styled.div`
  width: 30px;
  height: ${(p) => (p.$on ? 44 : 48)}px;
  margin-left: 2px;
  display: flex;
  align-items: center;
  justify-content: center;
  background: ${(p) => (p.$on ? "#fff" : "transparent")};
  border: 1px solid ${(p) => (p.$on ? "#c5c9cc" : "transparent")};
  border-right: 0;
  position: relative;
  z-index: 1;
`
const Panel = styled.div`
  width: 326px;
  flex: none;
  height: 818px;
  padding: 1px 2px 0 2px;
  border: 1px solid #b9bdc1;
  display: flex;
  flex-direction: column;
`
const FilterRow = styled.div`
  height: 24px;
  flex: none;
  margin-top: 1px;
  display: flex;
  gap: 2px;
`
const FilterBtn = styled.div`
  width: 23px;
  height: 24px;
  flex: none;
  background: #fff;
  border: 1px solid #c2c6ca;
  display: flex;
  align-items: center;
  justify-content: center;
`
const Tree = styled.div`
  margin-top: 2px;
  height: 763px;
  flex: none;
  border: 1px solid #b9bdc1;
  border-right-width: 2px;
  background: #fff;
  overflow: hidden;
`
const TreeHead = styled.div`
  height: 22px;
  display: flex;
  background: linear-gradient(#f8f9f9, #e9ebec);
  border-bottom: 1px solid #b9bdc1;
  line-height: 20px;
  color: #333;
`
const HeadCell = styled.div`
  width: 229px;
  padding-left: 4px;
  border-right: 1px solid #a9adb1;
`
const RowBox = styled.div`
  height: 18px;
  background: ${(p) => (p.$odd ? "#f4f5f5" : "#fff")};
`
const RowCell = styled.div`
  width: 229px;
  height: 18px;
  display: flex;
  align-items: center;
  padding-left: ${(p) => p.$pl}px;
  border-right: 1px solid #ced1d4;
  white-space: nowrap;
`
const RowText = styled.span`
  margin-left: 3px;
  color: ${(p) => (p.$gray ? "#999" : p.$red ? "#d42433" : "#2d2d2d")};
`
const IconGap = styled.span`
  display: block;
  flex: none;
  margin-left: ${(p) => p.$ml}px;
`
const Replay = styled.div`
  margin-top: 2px;
  height: 23px;
  flex: none;
  display: flex;
  align-items: center;
  gap: 6px;
  padding-left: 6px;
  background: #fbfbfb;
  border: 1px solid #b9bdc1;
  font-weight: 700;
  color: #444;
`
const Triangle = styled.span`
  width: 0;
  height: 0;
  border-left: 7px solid #555;
  border-top: 5px solid transparent;
  border-bottom: 5px solid transparent;
`

/* 오른쪽 뷰포트 */
const RightPane = styled.div`
  flex: 1;
  min-width: 0;
  display: flex;
  flex-direction: column;
`
const DocTabs = styled.div`
  height: 22px;
  flex: none;
  display: flex;
  align-items: center;
`
const DocTab = styled.div`
  width: 145px;
  height: 22px;
  flex: none;
  margin-left: 1px;
  background: #fff;
  border: 1px solid #d0d3d6;
  border-bottom: 0;
  display: flex;
  align-items: center;
  padding-left: 30px;
  white-space: nowrap;
  color: #333;
`
const Viewport = styled.div`
  position: relative;
  height: 816px;
  flex: none;
  border-top: 1px solid #c4c7ca;
  background: linear-gradient(#ffffff, #9e9e9e);
`
const ModelArt = styled.svg`
  position: absolute;
  left: 0;
  top: 0;
`
const ViewTop = styled.div`
  position: relative;
  display: flex;
  padding: 3px 0 0 20px;
`
const Hint = styled.div`
  width: 480px;
  flex: none;
  line-height: 15px;
  padding-top: 1px;
  white-space: nowrap;
  color: #222;
`
const ViewTools = styled.div`
  display: flex;
  align-items: center;
  height: 22px;
`
const LayerBox = styled.div`
  width: 115px;
  height: 22px;
  margin-left: 5px;
  flex: none;
  background: #fff;
  border: 1px solid #bcc1c5;
  display: flex;
  align-items: center;
  gap: 2px;
  padding: 0 4px 0 5px;
  color: #222;
`
const Scale = styled.div`
  position: absolute;
  left: 5px;
  bottom: 0;
  font-family: "Liberation Sans", sans-serif;
  font-size: 18px;
  line-height: 22px;
  color: #222;
`
const AxisLabel = styled.span`
  position: absolute;
  left: ${(p) => p.$x}px;
  top: ${(p) => p.$y}px;
  color: ${(p) => p.$c};
  font-family: "Liberation Sans", sans-serif;
  font-size: 16px;
  line-height: 16px;
`

/* 상태바 */
const StatusBar = styled.div`
  height: 30px;
  flex: none;
  display: flex;
  align-items: center;
  border-top: 2px solid #cfd3d6;
  padding-bottom: 2px;
`
const StatusActive = styled.div`
  margin-left: 1482px;
  width: 21px;
  height: 20px;
  flex: none;
  background: #f9e8b0;
  border: 1px solid #d9a93e;
  display: flex;
  align-items: center;
  justify-content: center;
`
const StatusInput = styled.div`
  flex: none;
  margin-left: 11px;
  width: 348px;
  height: 22px;
  background: #fff;
  border: 1px solid #bfc4c8;
`
const Gauge = styled.div`
  position: absolute;
  left: 1418px;
  top: 970px;
  width: 65px;
  height: 65px;
  border-radius: 50%;
  background: conic-gradient(#37d06b 0 68%, #cfd2d3 68% 100%);
  display: flex;
  align-items: center;
  justify-content: center;
  box-shadow: 0 0 6px rgba(0, 0, 0, 0.15);
  z-index: 5;
`
const GaugeInner = styled.div`
  width: 55px;
  height: 55px;
  border-radius: 50%;
  background: radial-gradient(circle at 50% 45%, #fff 55%, #e2f7e8 100%);
  display: flex;
  flex-direction: column;
  align-items: center;
  font-family: "Liberation Sans", sans-serif;
  color: #444;
`
const GaugeNum = styled.div`
  font-size: 22px;
  line-height: 24px;
  margin-top: 7px;
  & > small {
    font-size: 11px;
  }
`
const GaugeTemp = styled.div`
  display: flex;
  align-items: center;
  gap: 3px;
  font-size: 8.5px;
  line-height: 12px;
`
const ImeBar = styled.div`
  position: absolute;
  left: 1734px;
  top: 1001px;
  width: 125px;
  height: 19px;
  background: linear-gradient(#f4f8fc, #fff);
  border: 1px solid #c8d8e8;
  display: flex;
  align-items: center;
  z-index: 6;
`
const ImeLogo = styled.div`
  position: absolute;
  left: 1706px;
  top: 997px;
  width: 30px;
  height: 29px;
  background: #ee5a24;
  border-radius: 4px;
  transform: rotate(-12deg);
  color: #fff;
  font: 700 24px/28px "Liberation Sans", sans-serif;
  text-align: center;
  z-index: 7;
`
const ImeWord = styled.span`
  color: #1769c2;
  font-weight: 700;
  font-size: 13px;
  margin-left: 9px;
  flex: none;
`
const ImeDots = styled.span`
  color: #1769c2;
  font-weight: 700;
  font-size: 13px;
  margin-left: 11px;
  flex: none;
`
const Watermark = styled.div`
  position: absolute;
  left: 1638px;
  top: 1011px;
  color: rgba(255, 255, 255, 0.85);
  text-shadow: 0 0 1px rgba(0, 0, 0, 0.45);
  font-family: "Liberation Sans", sans-serif;
  font-size: 16px;
  line-height: 22px;
  white-space: nowrap;
  z-index: 8;
`

/* 드롭다운 메뉴 */
const Menu = styled.div`
  position: absolute;
  left: 568px;
  top: 26px;
  width: 170px;
  height: 200px;
  background: linear-gradient(90deg, #f1f3f4 0 25px, #d9dcde 25px 26px, #fff 26px);
  border: 1px solid #d0d3d6;
  box-shadow: 1px 1px 3px rgba(0, 0, 0, 0.3);
  padding-top: 1px;
  z-index: 10;
`
const MenuRow = styled.div`
  height: 22px;
  display: flex;
  align-items: center;
  padding-left: 4px;
  margin-top: ${(p) => (p.$hot ? 1 : 0)}px;
  color: ${(p) => (p.$dark ? "#444" : "#666")};
  background: ${(p) => (p.$hot ? "#fdf0c2" : "transparent")};
  outline: ${(p) => (p.$hot ? "1px solid #e9d47e" : "none")};
  outline-offset: -1px;
  white-space: nowrap;
`
const MenuIcon = styled.span`
  width: 18px;
  height: 20px;
  flex: none;
  display: flex;
  align-items: center;
  justify-content: center;
  background: ${(p) => (p.$on ? "#fbe2a8" : "transparent")};
  outline: ${(p) => (p.$on ? "1px solid #ecc777" : "none")};
  margin-right: 8px;
`

/* 대화상자 */
const Dialog = styled.div`
  position: absolute;
  left: 567px;
  top: 234px;
  width: 662px;
  height: 627px;
  background: #e8ebed;
  border: 1px solid #6f757a;
  border-bottom-width: 2px;
  box-shadow: 0 0 4px rgba(0, 0, 0, 0.25);
  display: flex;
  flex-direction: column;
  z-index: 9;
`
const DialogHead = styled.div`
  height: 33px;
  flex: none;
  display: flex;
  align-items: center;
  padding-left: 7px;
  gap: 5px;
  color: #555;
`
const HeadTools = styled.div`
  margin-left: auto;
  display: flex;
  gap: 14px;
  padding-right: 13px;
`
const DialogTabs = styled.div`
  height: 24px;
  flex: none;
  display: flex;
  padding-left: 15px;
  gap: 24px;
  color: #333;
  margin-bottom: 0;
`
const DialogTab = styled.div`
  width: ${(p) => (p.$on ? "40px" : "24px")};
  margin-left: ${(p) => (p.$on ? "-8px" : "0")};
  background: ${(p) => (p.$on ? "#fff" : "transparent")};
  text-align: center;
  line-height: 26px;
`
const DialogPane = styled.div`
  margin: 0 5px;
  height: 540px;
  flex: none;
  background: #e3e6e9;
  border: 1px solid #c5cacd;
  padding: 11px 10px 0 9px;
`
const Fieldset = styled.fieldset`
  margin: 0;
  padding: 0 3px 0 3px;
  height: 201px;
  border: 1px solid #a6abae;
  min-width: 0;
`
const Legend = styled.legend`
  margin-left: 2px;
  padding: 0 2px;
  line-height: 15px;
  color: #333;
`
const KeyGrid = styled.div`
  display: grid;
  grid-template-columns: 56px 268px 28.5px 268px;
  grid-template-rows: 16px repeat(4, 21px);
  row-gap: 6px;
  align-items: center;
  margin-top: 3.5px;
`
const Plus = styled.span`
  text-align: center;
  color: #333;
  font-size: 11px;
`
const HeadLabel = styled.span`
  color: #333;
  grid-column: ${(p) => p.$col};
`
const OptionRow = styled.div`
  display: flex;
  align-items: center;
  margin-top: ${(p) => p.$mt}px;
  height: 23px;
  gap: 5px;
`
const TickBox = styled.span`
  width: 13px;
  height: 13px;
  flex: none;
  background: #ecedee;
  border: 1px solid #8d9296;
  display: flex;
  align-items: center;
  justify-content: center;
`
const FlatBtn = styled.div`
  width: ${(p) => p.$w}px;
  height: ${(p) => p.$h}px;
  margin-left: ${(p) => p.$ml || 0}px;
  flex: none;
  background: ${(p) => (p.$def ? "#fffdf7" : "#fff")};
  border: 1px solid ${(p) => (p.$def ? "#e3bf6a" : "#c2c6ca")};
  box-shadow: ${(p) => (p.$def ? "inset 0 0 0 1px #fbe9b8" : "none")};
  display: flex;
  align-items: center;
  justify-content: center;
  color: #222;
`
const DialogFoot = styled.div`
  display: flex;
  padding: 1px 0 0 205px;
  gap: 6.5px;
`
const Grip = styled.span`
  position: absolute;
  right: 1px;
  bottom: 0;
`

/* 주석 표시 */
const Badge = styled.div`
  position: absolute;
  left: ${(p) => p.$x - 20}px;
  top: ${(p) => p.$y - 20}px;
  width: 40px;
  height: 40px;
  border-radius: 50%;
  background: #ee0a12;
  color: #fff;
  font: 17px/40px "Liberation Sans", sans-serif;
  text-align: center;
  z-index: 12;
`
const RedFrame = styled.div`
  position: absolute;
  left: ${(p) => p.$x}px;
  top: ${(p) => p.$y}px;
  width: ${(p) => p.$w}px;
  height: ${(p) => p.$h}px;
  border: 2px solid #d8141c;
  z-index: 11;
`

const menus = ["文件(F)", "编辑(E)", "视图(V)", "插入(I)", "属性(A)", "分析(N)", "工具(T)", "实用工具(U)", "应用(P)", "窗口(W)", "帮助(H)"]
const ribbonTabs = ["造型", "曲面", "线框", "直接编辑", "钣金", "FTI", "焊件", "点云", "数据交换", "修复", "PMI", "视图", "加工方案", "空间", "电极", "App", "模具"]

const utilCols = [
  [["link", "链接管理器", true], ["pi", "变量浏览器"], ["block", "块管理"]],
  [["optim", "设计优化器"], ["rename", "重命名文件"], ["query", "查询/替换名称"]],
  [["textedit", "文本文件编辑器"], ["shx", "SHX转换器"], ["sht", "边学边用编辑器"]],
  [["workdir", "工作目录"], ["license", "许可管理器"], ["userdir", "用户目录管理器"]],
  [["start", "开始另一ZW3D"], ["splitfile", "文件分离"], ["closefile", "关闭不用的文件"]],
]

const menuItems = [
  ["grid", "ZW3D管理器..."],
  ["link", "链接管理器..."],
  ["layers", "图层管理器"],
  ["pi", "变量浏览器..."],
  ["block", "管理草图块库"],
  ["optim", "设计优化器..."],
  ["sht", "边学边用编辑器..."],
  [null, "自定义..."],
  [null, "重置窗口布局"],
]

const features = [
  ["csys", "Default CSYS"],
  ["plane", "平面1", true],
  ["sketch", "草图1", true],
  ["extrude", "拉伸1_基体"],
  ["split", "分割1"],
  ["pattern", "阵列1"],
  ["wave", "线框1"],
  ["wave", "线框2"],
  ["wave", "线框3"],
  ["uv", "UV曲面1_网格"],
  ["eraser", "删除1"],
  ["eraser", "删除2"],
  ["flip", "反转1"],
  ["pattern", "阵列2"],
  ["surf", "曲面1"],
  ["surf", "曲面2"],
  ["sew", "缝合1"],
  ["thick", "加厚1"],
  ["sketch", "草图2", true],
  ["extrude", "拉伸2_基体"],
  ["pattern", "阵列3"],
  ["combine", "组合1_添加"],
]

const mouseRows = [
  ["平移", "无", "鼠标中键"],
  ["旋转", "无", "鼠标右键"],
  ["缩放", "Ctrl", "鼠标中键"],
  ["旋转轴", "Ctrl", "鼠标右键"],
]

const Model = () => (
  <ModelArt width="1558" height="816" viewBox="361 194 1558 816">
    <defs>
      <linearGradient id="rim" x1="0" y1="0" x2="0" y2="1">
        <stop offset="0" stopColor="#d8a400" />
        <stop offset=".2" stopColor="#dba500" />
        <stop offset=".3" stopColor="#ffcb30" />
        <stop offset=".42" stopColor="#ba8c00" />
        <stop offset=".65" stopColor="#c89700" />
        <stop offset=".82" stopColor="#a87f00" />
        <stop offset="1" stopColor="#d29f00" />
      </linearGradient>
      <linearGradient id="hub" x1="0" y1="0" x2="0" y2="1">
        <stop offset="0" stopColor="#cc9a00" />
        <stop offset=".2" stopColor="#dba500" />
        <stop offset=".29" stopColor="#ffcc33" />
        <stop offset=".42" stopColor="#bb8d00" />
        <stop offset=".62" stopColor="#c99800" />
        <stop offset=".83" stopColor="#a67d00" />
        <stop offset="1" stopColor="#d4a100" />
      </linearGradient>
      <linearGradient id="bore" x1="0" y1="0" x2="1" y2="0">
        <stop offset="0" stopColor="#b08000" />
        <stop offset=".5" stopColor="#dfa800" />
        <stop offset="1" stopColor="#b08000" />
      </linearGradient>
    </defs>
    <ellipse cx="1035" cy="860" rx="140" ry="105" fill="#b08000" stroke="#3a2c00" />
    <ellipse cx="1035" cy="865" rx="43" ry="33" fill="url(#bore)" stroke="#3a2c00" />
    <path d="M1030 860l2 38" stroke="#3a2c00" />
    <ellipse cx="932.5" cy="868" rx="17" ry="12.5" fill="url(#bore)" stroke="#3a2c00" />
    <ellipse cx="1138" cy="867" rx="17" ry="12.5" fill="url(#bore)" stroke="#3a2c00" />
    <ellipse cx="1031" cy="939" rx="17" ry="12.5" fill="url(#bore)" stroke="#3a2c00" />

    <ellipse cx="1297" cy="636" rx="9.5" ry="140" fill="#8a6a00" stroke="#1e1800" />
    <ellipse cx="1291" cy="560" rx="2" ry="16" fill="#b58a00" stroke="#1e1800" strokeDasharray="2 1" />
    <ellipse cx="1302" cy="565" rx="2" ry="18" fill="#b58a00" stroke="#1e1800" strokeDasharray="2 1" />
    <ellipse cx="1292" cy="712" rx="2" ry="18" fill="#b58a00" stroke="#1e1800" strokeDasharray="2 1" />
    <ellipse cx="1302" cy="712" rx="2" ry="18" fill="#b58a00" stroke="#1e1800" strokeDasharray="2 1" />
    <path d="M1296 496L1338 496A9 140 0 0 1 1342 776L1298 776A9 140 0 0 0 1296 496Z" fill="url(#rim)" />
    <path d="M1338 496A9 140 0 0 1 1342 776" fill="none" stroke="#2a2000" strokeDasharray="14 1" />
    <path d="M1296 496A9 140 0 0 1 1298 776" fill="none" stroke="#2a2000" />
    <path d="M1225 576L1296 576A5 60 0 0 1 1296 697L1225 697Z" fill="url(#hub)" />
    <path d="M1296 576A5 60 0 0 1 1296 697" fill="none" stroke="#2a2000" strokeDasharray="10 1" />
    <path d="M1234 577A3 60 0 0 1 1235 696" fill="none" stroke="#2a2000" strokeDasharray="6 1" />
    <path d="M1225 594h11" stroke="#2a2000" />

    <path d="M417 920l-6 9 4-2v24h5v-24l4 2z" fill="#0a14d8" stroke="#08108a" />
    <path d="M415 950h5V926" fill="none" stroke="#0000a0" />
    <path d="M414 925v26" stroke="#34c24a" strokeWidth="2" />
    <path d="M419 952h30l-1-5 17 5-17 5 1-5" fill="#e8141c" stroke="#d00" />
    <path d="M420 951h28" stroke="#ffb0b0" />
  </ModelArt>
)

const App = () => {
  return (
    <>
      <GlobalStyle />
      <Page>
        <TitleBar>
          <Strip
            from={0}
            items={[
              ["logo", 10, 17],
              ["vsep", 24],
              ["doc", 44],
              ["open", 69, 17],
              ["save", 92, 17],
              ["print", 116],
              ["undo", 140],
              ["redo", 164],
              ["sync", 188, 17],
              ["caret", 207, 12],
              ["back", 223, 13],
            ]}
          />
          <MenuBar>
            {menus.map((m) => (
              <span key={m}>{m}</span>
            ))}
          </MenuBar>
          <DocTitle>中望3D 2022 x64 - [曲面2021.Z3PRT]</DocTitle>
          <Strip from={1660} items={[["capMin", 1861], ["capRestore", 1884], ["capClose", 1907]]} />
        </TitleBar>

        <TabRow>
          <FileTab>文件(F)</FileTab>
          {ribbonTabs.map((t, i) => (
            <RibbonTab key={t} $ml={i === 0 ? 2 : 0}>
              {t}
            </RibbonTab>
          ))}
          <Strip from={881} items={[["chevUp", 1643, 12]]} />
          <SearchBox>
            查找命令
            <Ico n="search" s={15} />
          </SearchBox>
          <Strip
            from={1801}
            items={[
              ["gear", 1818, 18],
              ["help", 1846, 18],
              ["dcaret", 1862, 10],
              ["winMin", 1875, 12],
              ["winRestore", 1895, 13],
              ["winClose", 1911, 11],
            ]}
          />
        </TabRow>

        <Ribbon>
          <Group $w={253}>
            <GroupBody $pl={14} $gap={12.5}>
              <BigItem><Ico n="sigma" s={30} />方程式管理器</BigItem>
              <BigItem><Ico n="subpart" s={30} />子零件</BigItem>
              <BigItem><Ico n="config" s={30} />配置表</BigItem>
              <BigItem><Ico n="autodraw" s={30} />自动出图</BigItem>
            </GroupBody>
            <GroupLabel>插入</GroupLabel>
          </Group>
          <Group $w={173}>
            <GroupBody $pl={9} $gap={12}>
              <BigItem><Ico n="libpub" s={30} />库发布</BigItem>
              <BigItem><Ico n="udfwiz" s={30} />UDF向导</BigItem>
              <BigItem><Ico n="udfins" s={30} />插入UDF</BigItem>
            </GroupBody>
            <GroupLabel>库</GroupLabel>
            <Launcher><Ico n="launcher" s={12} /></Launcher>
          </Group>
          <Group $w={268}>
            <GroupBody $pl={7} $gap={6}>
              <BigItem><Ico n="part" s={30} />零件</BigItem>
              <BigItem><Ico n="material" s={30} />材料</BigItem>
              <BigItem><Ico n="sheet" s={30} />钣金</BigItem>
              <BigItem><Ico n="part" s={30} />批量</BigItem>
            </GroupBody>
            <GroupLabel $pr={14}>属性</GroupLabel>
          </Group>
          <Group $w={142}>
            <GroupBody $end $pr={7} $gap={6}>
              <BigItem><Ico n="cog" s={30} />配置</BigItem>
              <BigItem><Ico n="steps" s={30} />步距</BigItem>
              <BigItem><Ico n="note" s={30} />笔记</BigItem>
            </GroupBody>
            <GroupLabel>设置</GroupLabel>
          </Group>
          <Group $w={550}>
            <GroupBody $pl={9} $gap={9.5}>
              {utilCols.map((col, i) => (
                <UtilCol key={i}>
                  {col.map(([n, t, more]) => (
                    <UtilRow key={t}>
                      <Ico n={n} />
                      {t}
                      {more && <Ico n="dcaret" s={10} />}
                    </UtilRow>
                  ))}
                </UtilCol>
              ))}
            </GroupBody>
            <GroupLabel $pr={14}>实用工具</GroupLabel>
            <Launcher><Ico n="launcher" s={12} /></Launcher>
          </Group>
          <Group $w={122}>
            <GroupBody $pl={9}>
              <UtilRow><Ico n="appmgr" />应用程序管理器</UtilRow>
            </GroupBody>
            <GroupLabel $pr={14}>应用程序</GroupLabel>
            <Launcher><Ico n="launcher" s={12} /></Launcher>
          </Group>
        </Ribbon>

        <QuickBar>
          <Strip from={0} items={[["handle", 5, 10]]} />
          <ActiveTool $w={23} $ml={0}><Ico n="pick" /></ActiveTool>
          <Strip
            from={33}
            items={[
              ["plus", 44],
              ["minus", 69],
              ["dashBox", 92],
              ["dcaret", 108, 10],
              ["hex", 129],
              ["vsep", 144],
              ["chartFilter", 160, 18],
            ]}
          />
          <Combo $w={95} $ml={5}>全部<Ico n="caret" s={11} /></Combo>
          <ActiveTool $w={22} $ml={3}><Ico n="goldCube" s={18} /></ActiveTool>
          <Combo $w={130} $ml={2} $off>仅有零件<Ico n="dcaret" s={11} /></Combo>
          <Strip
            from={426}
            items={[
              ["gLines", 439],
              ["gBell", 462],
              ["vsep", 478],
              ["gAlign", 492],
              ["gAlign", 518],
              ["gAlign", 541],
              ["gAlign", 563],
              ["gSquare", 742],
            ]}
          />
          <Combo $w={96} $ml={4} $off>法向<Ico n="dcaret" s={11} /></Combo>
          <Strip
            from={850}
            items={[
              ["gPick", 862],
              ["gGear", 887],
              ["gPlay", 911],
              ["gDots", 935],
              ["gLine", 959],
              ["gLine2", 983],
              ["gCircleDot", 1007],
              ["gCircle", 1031],
              ["gWave", 1054],
              ["gWave", 1078],
              ["gArc", 1102],
              ["gLine", 1126],
              ["gBlob", 1151],
              ["gBlob", 1175],
            ]}
          />
        </QuickBar>

        <Main>
          <LeftPane>
            <PaneHead>
              管理器
              <Strip from={40} items={[["capMin", 327, 13], ["capClose", 346, 13]]} />
            </PaneHead>
            <PaneBody>
              <SideTabs>
                <SideTab $on><Ico n="tabPart" s={26} /></SideTab>
                <SideTab><Ico n="tabSolid" s={24} /></SideTab>
                <SideTab><Ico n="tabImage" s={24} /></SideTab>
                <SideTab><Ico n="tabUser" s={24} /></SideTab>
              </SideTabs>
              <Panel>
                <FilterRow>
                  <Combo $w={147} $h={24}>显示常用<Ico n="caret" s={11} /></Combo>
                  <Combo $w={146} $h={24} />
                  <FilterBtn><Ico n="funnel" s={17} /></FilterBtn>
                </FilterRow>
                <Tree>
                  <TreeHead><HeadCell>特征节点</HeadCell></TreeHead>
                  <RowBox>
                    <RowCell $pl={2}>
                      <Ico n="chevD" s={11} />
                      <IconGap $ml={4}><Ico n="hier" /></IconGap>
                      <RowText>曲面2021</RowText>
                    </RowCell>
                  </RowBox>
                  <RowBox $odd>
                    <RowCell $pl={16}>
                      <Ico n="chevR" s={11} />
                      <IconGap $ml={4}><Ico n="solid" /></IconGap>
                      <RowText>实体(1)</RowText>
                    </RowCell>
                  </RowBox>
                  <RowBox>
                    <RowCell $pl={16}>
                      <Ico n="chevR" s={11} />
                      <IconGap $ml={4}><Ico n="wire" /></IconGap>
                      <RowText>线框(12)</RowText>
                    </RowCell>
                  </RowBox>
                  <RowBox $odd>
                    <RowCell $pl={16}>
                      <Ico n="chevD" s={11} />
                      <IconGap $ml={4}><Ico n="folder" /></IconGap>
                      <RowText>历史</RowText>
                    </RowCell>
                  </RowBox>
                  {features.map(([n, t, gray], i) => (
                    <RowBox key={t} $odd={i % 2 === 1}>
                      <RowCell $pl={44}>
                        <Ico n="check" s={14} />
                        <IconGap $ml={5}><Ico n={n} /></IconGap>
                        <RowText $gray={gray}>{t}</RowText>
                      </RowCell>
                    </RowBox>
                  ))}
                  <RowBox>
                    <RowCell $pl={44}>
                      <Ico n="stop" />
                      <RowText $red>----- 建模停止 -----</RowText>
                    </RowCell>
                  </RowBox>
                  {Array.from({ length: 14 }, (_, i) => (
                    <RowBox key={i} $odd={i % 2 === 0} />
                  ))}
                </Tree>
                <Replay><Triangle />回放</Replay>
              </Panel>
            </PaneBody>
          </LeftPane>

          <RightPane>
            <DocTabs>
              <DocTab>
                曲面2021.Z3PRT
                <Strip from={477} items={[["docClose", 488, 11]]} />
              </DocTab>
              <Strip from={507} items={[["plus2", 519, 12]]} />
              <Strip from={525} items={[["dcaret", 1909, 14]]} />
            </DocTabs>
            <Viewport>
              <Model />
              <ViewTop>
                <Hint>
                  按下&lt;F2&gt;动态的观察
                  <br />
                  &lt;F8&gt;或者&lt;Shift-roll&gt; 查找下一个有效的选择
                </Hint>
                <ViewTools>
                  <Strip
                    from={861}
                    items={[
                      ["exit", 871],
                      ["mesh", 896],
                      ["dcaret", 911, 10],
                      ["eraser", 934],
                      ["cubeUp", 959, 17],
                      ["blueCube", 983, 18],
                      ["dcaret", 999, 10],
                      ["wireCube", 1021, 18],
                      ["dcaret", 1035.5, 10],
                      ["halfCube", 1057, 18],
                      ["dcaret", 1072, 10],
                      ["coin", 1094.5, 18],
                      ["dcaret", 1109, 10],
                      ["frame", 1131],
                      ["dim", 1156],
                      ["dcaret", 1171, 10],
                      ["net", 1194],
                      ["dcaret", 1208, 10],
                      ["blueRect", 1230],
                      ["orange", 1255],
                      ["layers", 1280, 17],
                      ["dcaret", 1295, 10],
                    ]}
                  />
                  <LayerBox>
                    <Ico n="bulb" />
                    <Ico n="sun" />
                    图层0000
                    <Ico n="dcaret" s={11} />
                  </LayerBox>
                </ViewTools>
              </ViewTop>
              <AxisLabel $x={44} $y={714} $c="#2fc14a">Y</AxisLabel>
              <AxisLabel $x={54} $y={714} $c="#2230c8">Z</AxisLabel>
              <AxisLabel $x={109} $y={751} $c="#e8141c">X</AxisLabel>
              <Scale>190.018 mm</Scale>
            </Viewport>
          </RightPane>
        </Main>

        <StatusBar>
          <StatusActive><Ico n="status1" /></StatusActive>
          <Strip from={1503} items={[["monitor", 1521, 17], ["lines", 1550, 16]]} />
          <StatusInput />
        </StatusBar>

        <Menu>
          {menuItems.map(([n, t], i) => (
            <MenuRow key={t} $hot={i === 7} $dark={i > 6}>
              <MenuIcon $on={i === 0}>{n && <Ico n={n} />}</MenuIcon>
              {t}
            </MenuRow>
          ))}
        </Menu>

        <Dialog>
          <DialogHead>
            <Ico n="logo" s={15} />
            自定义
            <HeadTools>
              <Ico n="tip" s={14} />
              <Ico n="capClose" s={14} />
            </HeadTools>
          </DialogHead>
          <DialogTabs>
            <DialogTab>命令</DialogTab>
            <DialogTab>转换</DialogTab>
            <DialogTab>热键</DialogTab>
            <DialogTab $on>鼠标</DialogTab>
          </DialogTabs>
          <DialogPane>
            <Fieldset>
              <Legend>鼠标行为</Legend>
              <KeyGrid>
                <HeadLabel $col={2}>功能键</HeadLabel>
                <HeadLabel $col={4}>鼠标按钮</HeadLabel>
                {mouseRows.map(([label, key, btn]) => (
                  <React.Fragment key={label}>
                    <span>{label}</span>
                    <Combo $w={268}>{key}<Ico n="dcaret" s={11} /></Combo>
                    <Plus>+</Plus>
                    <Combo $w={268}>{btn}<Ico n="dcaret" s={11} /></Combo>
                  </React.Fragment>
                ))}
              </KeyGrid>
              <OptionRow $mt={6}>
                <TickBox />
                反转鼠标滚轮缩放方向
                <FlatBtn $w={74} $h={23} $ml={341}>默认</FlatBtn>
                <FlatBtn $w={28} $h={23} $ml={2}><Ico n="open2" /></FlatBtn>
                <FlatBtn $w={27} $h={23} $ml={-5}><Ico n="save2" /></FlatBtn>
              </OptionRow>
              <OptionRow $mt={5.5}>
                <TickBox><Ico n="gCheck" s={11} /></TickBox>
                中键重复
              </OptionRow>
            </Fieldset>
          </DialogPane>
          <DialogFoot>
            <FlatBtn $w={75} $h={23} $def>确认</FlatBtn>
            <FlatBtn $w={75} $h={23}>取消</FlatBtn>
            <FlatBtn $w={75} $h={23}>应用</FlatBtn>
          </DialogFoot>
          <Grip><Ico n="grip" s={12} /></Grip>
        </Dialog>

        <RedFrame $x={568} $y={2} $w={43} $h={22} />
        <RedFrame $x={585} $y={178} $w={82} $h={27} />
        <RedFrame $x={716} $y={267} $w={46} $h={28} />
        <RedFrame $x={574} $y={302} $w={641} $h={210} />
        <Badge $x={531} $y={16}>1</Badge>
        <Badge $x={703} $y={194}>2</Badge>
        <Badge $x={798.5} $y={277}>3</Badge>

        <Gauge>
          <GaugeInner>
            <GaugeNum>68<small>%</small></GaugeNum>
            <GaugeTemp><Ico n="thermo" s={11} />38°C</GaugeTemp>
          </GaugeInner>
        </Gauge>
        <ImeBar>
          <ImeWord>英</ImeWord>
          <ImeDots>•,</ImeDots>
          <IconGap $ml={8}><Ico n="mic" /></IconGap>
          <IconGap $ml={8}><Ico n="keys" /></IconGap>
          <IconGap $ml={8}><Ico n="tiles" /></IconGap>
        </ImeBar>
        <ImeLogo>S</ImeLogo>
        <Watermark>https://blog.csdn.net/weixin_45911798</Watermark>
      </Page>
    </>
  )
}

export default App
